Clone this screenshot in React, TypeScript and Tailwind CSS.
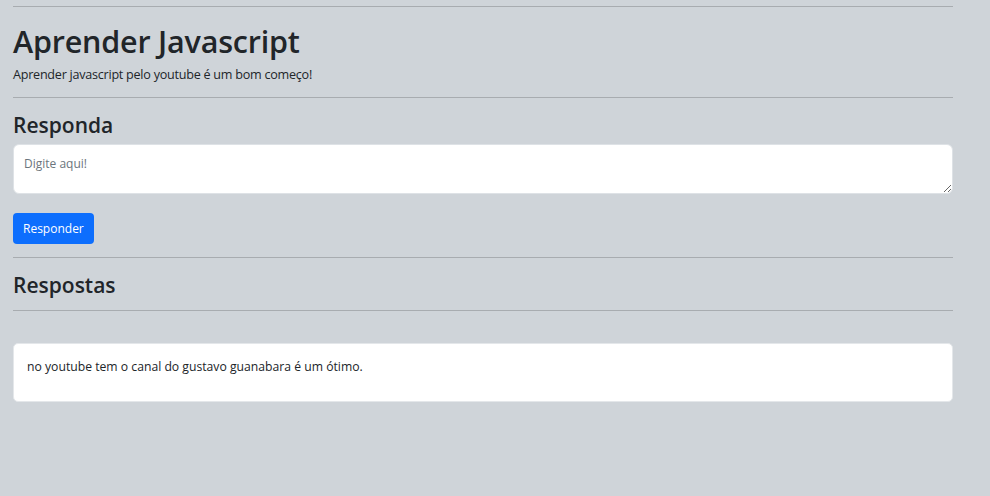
export default function App() {
  return (
    <div className="min-h-[496px] w-full bg-[#cfd4d9] font-['Open_Sans',sans-serif] text-[#212529]">
      <div className="w-[940px] ml-[13px] pt-[6px]">
        <hr className="border-0 border-t border-[#a8acb0]" />
        <h1 className="mt-[14px] text-[30.5px] leading-[40px] font-semibold tracking-[-0.2px]">Aprender Javascript</h1>
        <p className="mt-[5px] text-[12.6px] leading-[18px] tracking-[-0.25px]">
          Aprender javascript pelo youtube é um bom começo!
        </p>
        <hr className="mt-[13px] border-0 border-t border-[#a8acb0]" />
        <h3 className="mt-[13px] text-[21px] leading-[28px] font-semibold">Responda</h3>
        <textarea
          placeholder="Digite aqui!"
          className="mt-[5px] block w-full h-[50px] rounded-[6px] border border-[#dee2e6] bg-white px-[10px] py-[10px] text-[12px] leading-[18px] placeholder:text-[#6c757d] outline-none"
        />
        <button className="mt-[19px] h-[31px] rounded-[4px] bg-[#0d6efd] px-[10px] text-[12px] text-white">
          Responder
        </button>
        <hr className="mt-[13px] border-0 border-t border-[#a8acb0]" />
        <h3 className="mt-[13px] text-[21px] leading-[28px] font-semibold">Respostas</h3>
        <hr className="mt-[11px] border-0 border-t border-[#a8acb0]" />
        <div className="mt-[32px] h-[59px] rounded-[5px] border border-[#e4e7ea] bg-white px-[13px] pt-[14px] text-[12.2px] leading-[18px]">
          no youtube tem o canal do gustavo guanabara é um ótimo.
        </div>
      </div>
    </div>
  );
}
